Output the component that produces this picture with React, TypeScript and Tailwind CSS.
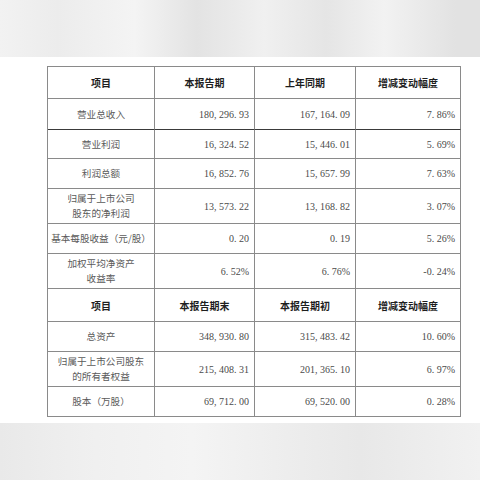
const cjk = "font-['Noto_Sans_CJK_SC',sans-serif]"
const num = "font-['Liberation_Serif','Noto_Sans_CJK_SC',serif]"

type Row = {
  label: string[]
  a: string
  b: string
  c: string
  h: string
  dark?: boolean
  head?: boolean
}

const rows: Row[] = [
  { label: ['项目'], a: '本报告期', b: '上年同期', c: '增减变动幅度', h: 'h-[32px]', head: true },
  { label: ['营业总收入'], a: '180,296.93', b: '167,164.09', c: '7.86%', h: 'h-[31px]', dark: true },
  { label: ['营业利润'], a: '16,324.52', b: '15,446.01', c: '5.69%', h: 'h-[29px]' },
  { label: ['利润总额'], a: '16,852.76', b: '15,657.99', c: '7.63%', h: 'h-[30px]' },
  { label: ['归属于上市公司', '股东的净利润'], a: '13,573.22', b: '13,168.82', c: '3.07%', h: 'h-[35px]' },
  { label: ['基本每股收益（元/股）'], a: '0.20', b: '0.19', c: '5.26%', h: 'h-[30px]' },
  { label: ['加权平均净资产', '收益率'], a: '6.52%', b: '6.76%', c: '-0.24%', h: 'h-[35px]' },
  { label: ['项目'], a: '本报告期末', b: '本报告期初', c: '增减变动幅度', h: 'h-[33px]', head: true },
  { label: ['总资产'], a: '348,930.80', b: '315,483.42', c: '10.60%', h: 'h-[30px]' },
  { label: ['归属于上市公司股东', '的所有者权益'], a: '215,408.31', b: '201,365.10', c: '6.97%', h: 'h-[35px]' },
  { label: ['股本（万股）'], a: '69,712.00', b: '69,520.00', c: '0.28%', h: 'h-[30px]' },
]

// wide punctuation like the report's song-style font
function Num({ value }: { value: string }) {
  return (
    <>
      {value.split(/([,.])/).map((p, i) =>
        p === ',' || p === '.' ? (
          <span key={i} className="mr-[2.5px]">{p}</span>
        ) : (
          <span key={i}>{p}</span>
        )
      )}
    </>
  )
}

function Cell({ row, text, first }: { row: Row; text: string; first?: boolean }) {
  const line = row.dark ? 'border-b-[#3a3a3a]' : 'border-b-[#8a8a8a]'
  if (row.head) {
    return (
      <div className={`${row.h} ${line} border-b border-r border-r-[#8a8a8a] flex items-center justify-center ${cjk} font-bold text-[10px] text-[#1e1e1e]`}>
        {text}
      </div>
    )
  }
  if (first) {
    return (
      <div className={`${row.h} ${line} border-b border-r border-r-[#8a8a8a] flex flex-col items-center justify-center ${cjk} text-[9.6px] leading-[15px] text-[#5a5a5a] whitespace-nowrap`}>
        {row.label.map((l) => (
          <span key={l}>{l}</span>
        ))}
      </div>
    )
  }
  return (
    <div className={`${row.h} ${line} border-b border-r border-r-[#8a8a8a] flex items-center justify-end pr-[5px] ${num} text-[10px] text-[#4a4a4a]`}>
      <Num value={text} />
    </div>
  )
}

export default function App() {
  return (
    <div className="w-[480px] h-[480px] flex flex-col bg-white overflow-hidden">
      <div className="h-[57px] bg-[linear-gradient(90deg,#f2f2f2_0%,#ececec_12%,#f4f4f4_28%,#e3e3e3_41%,#f0f0f0_55%,#e5e5e5_68%,#f2f2f2_80%,#e2e2e2_95%)]" />
      <div className="h-[366px] pt-[9px] pl-[47px]">
        <div className="grid grid-cols-[107px_100px_101px_105px] w-[414px] border-l border-t border-[#8a8a8a]">
          {rows.map((r, i) => (
            <div key={i} className="contents">
              <Cell row={r} text={r.label[0]} first />
              <Cell row={r} text={r.a} />
              <Cell row={r} text={r.b} />
              <Cell row={r} text={r.c} />
            </div>
          ))}
        </div>
      </div>
      <div className="flex-1 bg-[linear-gradient(90deg,#e9e9e9_0%,#f0f0f0_20%,#f4f4f4_40%,#ededed_60%,#e8e8e8_75%,#f1f1f1_100%)]" />
    </div>
  )
}
